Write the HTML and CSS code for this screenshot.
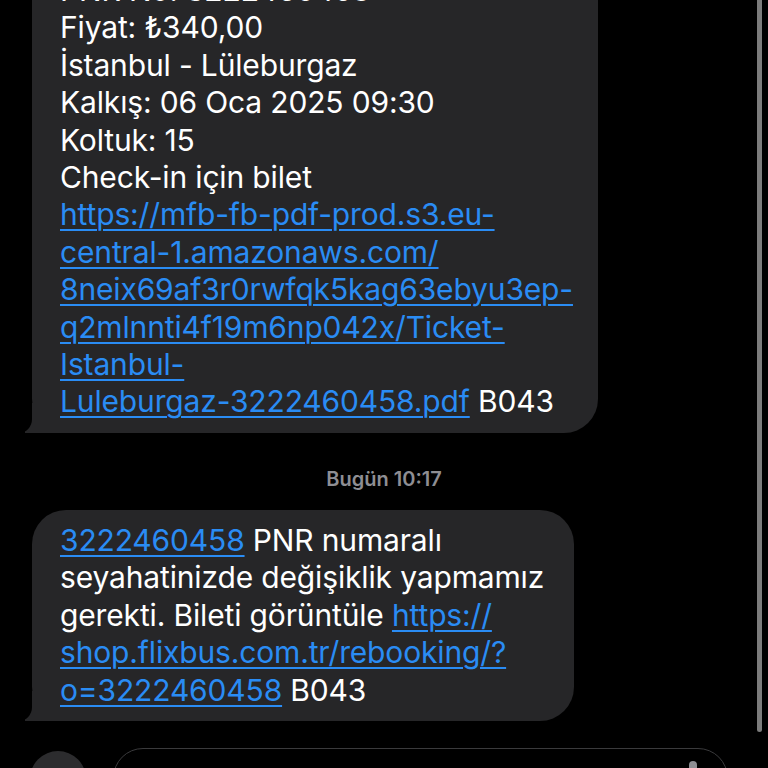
FILE: index.html
```html
<!DOCTYPE html>
<html lang="tr">
<head>
    <meta charset="UTF-8">
    <meta name="viewport" content="width=device-width, initial-scale=1.0">
    <title>Mesajlar</title>
    <link rel="stylesheet" href="styles.css">
</head>
<body>
    <main class="thread">
        <div class="bubble bubble-first">
            <p class="msg">
                PNR No: 3222460458<br>
                Fiyat: ₺340,00<br>
                İstanbul - Lüleburgaz<br>
                Kalkış: 06 Oca 2025 09:30<br>
                Koltuk: 15<br>
                Check-in için bilet<br>
                <a href="#">https://mfb-fb-pdf-prod.s3.eu-</a><br>
                <a href="#">central-1.amazonaws.com/</a><br>
                <a href="#">8neix69af3r0rwfqk5kag63ebyu3ep-</a><br>
                <a href="#">q2mlnnti4f19m6np042x/Ticket-</a><br>
                <a href="#">Istanbul-</a><br>
                <a href="#">Luleburgaz-3222460458.pdf</a> B043
            </p>
        </div>

        <div class="stamp">Bugün 10:17</div>

        <div class="bubble bubble-second">
            <p class="msg">
                <a href="#">3222460458</a> PNR numaralı<br>
                seyahatinizde değişiklik yapmamız<br>
                gerekti. Bileti görüntüle <a href="#">https://</a><br>
                <a href="#">shop.flixbus.com.tr/rebooking/?</a><br>
                <a href="#">o=3222460458</a> B043
            </p>
        </div>
    </main>

    <footer class="composer">
        <div class="plus-btn"></div>
        <div class="input-box">
            <span class="mic"></span>
        </div>
    </footer>

    <div class="scrollbar"></div>
</body>
</html>
```

FILE: styles.css
```css
html, body {
    margin: 0;
    height: 768px;
    overflow: hidden;
    background: #000;
}

body {
    position: relative;
    font-family: Inter, "Noto Sans", sans-serif;
    color: #fff;
}

.thread {
    display: flex;
    flex-direction: column;
    align-items: flex-start;
    padding-left: 32px;
    margin-top: -40px;
}

.bubble {
    position: relative;
    background: #262628;
    border-radius: 34px;
    padding: 12px 20px 12px 28px;
    box-sizing: border-box;
}

.bubble-first {
    width: 566px;
}

.bubble-second {
    width: 542px;
}

/* tail: a square corner, then a black cut-out curving it to a point */
.bubble::before {
    content: "";
    position: absolute;
    left: -7px;
    bottom: 0;
    width: 42px;
    height: 30px;
    background: #262628;
    z-index: 0;
}

.bubble::after {
    content: "";
    position: absolute;
    left: -26px;
    bottom: 0;
    width: 26px;
    height: 30px;
    background: #000;
    border-bottom-right-radius: 13px 14px;
    z-index: 1;
}

.msg {
    position: relative;
    z-index: 2;
    margin: 0;
    font-size: 30px;
    line-height: 37.4px;
    letter-spacing: -0.15px;
    white-space: nowrap;
}

.msg a {
    color: #2a8cf4;
    text-decoration: underline;
    text-decoration-thickness: 2px;
    text-underline-offset: 4px;
}

.stamp {
    align-self: stretch;
    margin: 33px 0 18px -32px;
    text-align: center;
    font-size: 20px;
    font-weight: 600;
    line-height: 26px;
    color: #8e8e93;
}

.composer {
    display: flex;
    align-items: flex-start;
    margin-top: 27px;
    padding-left: 30px;
}

.plus-btn {
    width: 56px;
    height: 56px;
    margin-top: 3px;
    border-radius: 50%;
    background: #2c2c2e;
}

.input-box {
    position: relative;
    width: 615px;
    height: 60px;
    margin-left: 27px;
    border: 1.5px solid #3a3a3c;
    border-radius: 30px;
    box-sizing: border-box;
}

.mic {
    position: absolute;
    right: 30px;
    top: 12px;
    width: 8px;
    height: 14px;
    border-radius: 4px;
    background: #8e8e93;
}

.scrollbar {
    position: absolute;
    top: 0;
    left: 757px;
    width: 5px;
    height: 732px;
    border-radius: 0 0 3px 3px;
    background: #7c7c7c;
}
```
